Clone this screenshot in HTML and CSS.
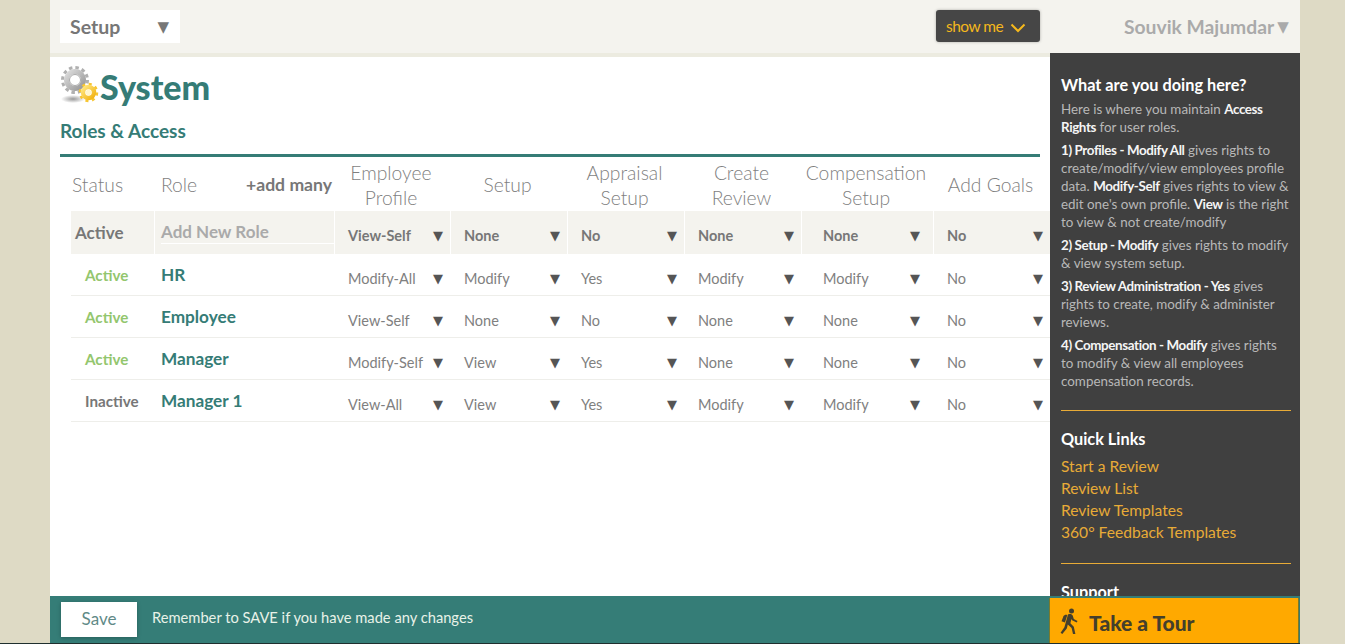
FILE: index.html
```html
<!DOCTYPE html>
<html lang="en">
<head>
<meta charset="utf-8">
<title>System - Roles &amp; Access</title>
<link rel="stylesheet" href="styles.css">
</head>
<body>
<div class="shell">
  <header class="topbar">
    <div class="nav-select"><span>Setup</span><span class="nav-arrow">▼</span></div>
    <button class="show-me">show me
      <svg class="chev" width="16" height="10" viewBox="0 0 16 10"><path d="M1.500 1.500 8 8l6.500-6.500" fill="none" stroke="#f5b81c" stroke-width="2"/></svg>
    </button>
    <div class="user"><span>Souvik Majumdar</span><span class="user-arrow">▼</span></div>
  </header>
  <div class="content">
    <main class="main">
      <div class="title-row">
        <svg class="gears" width="40" height="40" viewBox="0 0 40 40">
          <defs>
            <linearGradient id="gr" x1="0" y1="0" x2="1" y2="1"><stop offset="0" stop-color="#dcdcdc"/><stop offset="1" stop-color="#979797"/></linearGradient>
            <linearGradient id="go" x1="0" y1="0" x2="1" y2="1"><stop offset="0" stop-color="#ffe680"/><stop offset="1" stop-color="#f2b311"/></linearGradient>
            <radialGradient id="sh"><stop offset="0" stop-color="#999"/><stop offset="1" stop-color="#999" stop-opacity="0"/></radialGradient>
          </defs>
          <ellipse cx="13" cy="34" rx="12" ry="4" fill="url(#sh)"/>
          <circle cx="15" cy="15" r="12.500" fill="none" stroke="#b0b0b0" stroke-width="3" stroke-dasharray="3.500 3.045"/>
          <circle cx="15" cy="15" r="8.500" fill="none" stroke="url(#gr)" stroke-width="5"/>
          <circle cx="15" cy="15" r="5.500" fill="#fff" stroke="#aaa" stroke-width="1"/>
          <circle cx="28.500" cy="27.500" r="8.500" fill="none" stroke="#f7c631" stroke-width="2.500" stroke-dasharray="3 3.675"/>
          <circle cx="28.500" cy="27.500" r="5.500" fill="none" stroke="url(#go)" stroke-width="4.500"/>
          <circle cx="28.500" cy="27.500" r="2.800" fill="#fff6cf"/>
        </svg>
        <h1 class="title">System</h1>
      </div>
      <h2 class="subtitle">Roles &amp; Access</h2>
      <div class="rule"></div>
      <div class="table">
        <div class="row head">
          <div class="hcell left">Status</div>
          <div class="hcell role-head"><span>Role</span><span class="add-many">+add many</span></div>
          <div class="hcell">Employee<br>Profile</div>
          <div class="hcell">Setup</div>
          <div class="hcell">Appraisal<br>Setup</div>
          <div class="hcell">Create<br>Review</div>
          <div class="hcell">Compensation<br>Setup</div>
          <div class="hcell">Add Goals</div>
        </div>
        <div class="row add">
          <div class="status strong">Active</div>
          <div class="role-input"><span class="role-input-text">Add New Role</span></div>
          <div class="sel"><span>View-Self</span><i>▼</i></div>
          <div class="sel"><span>None</span><i>▼</i></div>
          <div class="sel"><span>No</span><i>▼</i></div>
          <div class="sel"><span>None</span><i>▼</i></div>
          <div class="sel wide"><span>None</span><i>▼</i></div>
          <div class="sel"><span>No</span><i>▼</i></div>
        </div>
        <div class="row item">
          <div class="status on">Active</div>
          <div class="role">HR</div>
          <div class="sel"><span>Modify-All</span><i>▼</i></div>
          <div class="sel"><span>Modify</span><i>▼</i></div>
          <div class="sel"><span>Yes</span><i>▼</i></div>
          <div class="sel"><span>Modify</span><i>▼</i></div>
          <div class="sel wide"><span>Modify</span><i>▼</i></div>
          <div class="sel"><span>No</span><i>▼</i></div>
        </div>
        <div class="row item">
          <div class="status on">Active</div>
          <div class="role">Employee</div>
          <div class="sel"><span>View-Self</span><i>▼</i></div>
          <div class="sel"><span>None</span><i>▼</i></div>
          <div class="sel"><span>No</span><i>▼</i></div>
          <div class="sel"><span>None</span><i>▼</i></div>
          <div class="sel wide"><span>None</span><i>▼</i></div>
          <div class="sel"><span>No</span><i>▼</i></div>
        </div>
        <div class="row item">
          <div class="status on">Active</div>
          <div class="role">Manager</div>
          <div class="sel"><span>Modify-Self</span><i>▼</i></div>
          <div class="sel"><span>View</span><i>▼</i></div>
          <div class="sel"><span>Yes</span><i>▼</i></div>
          <div class="sel"><span>None</span><i>▼</i></div>
          <div class="sel wide"><span>None</span><i>▼</i></div>
          <div class="sel"><span>No</span><i>▼</i></div>
        </div>
        <div class="row item">
          <div class="status off">Inactive</div>
          <div class="role">Manager 1</div>
          <div class="sel"><span>View-All</span><i>▼</i></div>
          <div class="sel"><span>View</span><i>▼</i></div>
          <div class="sel"><span>Yes</span><i>▼</i></div>
          <div class="sel"><span>Modify</span><i>▼</i></div>
          <div class="sel wide"><span>Modify</span><i>▼</i></div>
          <div class="sel"><span>No</span><i>▼</i></div>
        </div>
      </div>
    </main>
    <aside class="side">
      <h3 class="side-h first">What are you doing here?</h3>
      <p class="side-p">Here is where you maintain <b>Access<br>Rights</b> for user roles.</p>
      <p class="side-p"><b>1) Profiles - Modify All</b> gives rights to<br>create/modify/view employees profile<br>data. <b>Modify-Self</b> gives rights to view &amp;<br>edit one's own profile. <b>View</b> is the right<br>to view &amp; not create/modify</p>
      <p class="side-p"><b>2) Setup - Modify</b> gives rights to modify<br>&amp; view system setup.</p>
      <p class="side-p"><b>3) Review Administration - Yes</b> gives<br>rights to create, modify &amp; administer<br>reviews.</p>
      <p class="side-p"><b>4) Compensation - Modify</b> gives rights<br>to modify &amp; view all employees<br>compensation records.</p>
      <div class="side-hr"></div>
      <h3 class="side-h">Quick Links</h3>
      <div class="links">
        <a href="#">Start a Review</a>
        <a href="#">Review List</a>
        <a href="#">Review Templates</a>
        <a href="#">360° Feedback Templates</a>
      </div>
      <div class="side-hr"></div>
      <h3 class="side-h">Support</h3>
    </aside>
  </div>
  <footer class="footer">
    <button class="save">Save</button>
    <span class="remember">Remember to SAVE if you have made any changes</span>
    <div class="tour">
      <svg class="hiker" width="20" height="27" viewBox="0 0 20 27">
        <circle cx="11.500" cy="3" r="2.500" fill="#443f2c"/>
        <path d="M8 6.500c2-.8 4-.5 4.800 1.200l1 3.300 3.700 2-.8 1.500-4.600-2.200-.7-1.300-1 4.300 3.400 3.500 1.600 7.200h-2.400l-1.400-6-3.800-3.400-1 3.800L2.300 26 .6 24.700l3.800-5.500z" fill="#443f2c"/>
        <path d="M7.300 7 5 14.500 1.500 13.300 3.500 8.200C4.200 6.800 6 6.300 7.300 7z" fill="#443f2c"/>
      </svg>
      <span class="tour-text">Take a Tour</span>
    </div>
  </footer>
</div>
<div class="base-line"></div>
</body>
</html>
```
FILE: styles.css
```css
* { box-sizing: border-box; }
html, body { margin: 0; padding: 0; }
body {
  height: 644px;
  overflow: hidden;
  background: #dedac5;
  font-family: "Lato", "Open Sans", sans-serif;
  color: #777;
}
.shell {
  width: 1250px;
  height: 643px;
  margin-left: 50px;
  display: flex;
  flex-direction: column;
}
.base-line { height: 1px; width: 1300px; background: #1f2f2e; }

/* top bar */
.topbar {
  height: 53px;
  flex: none;
  background: #f4f3ee;
  display: flex;
  align-items: flex-start;
  padding: 10px 10px 0;
}
.nav-select {
  width: 120px;
  height: 33px;
  background: #fff;
  display: flex;
  justify-content: space-between;
  align-items: center;
  padding: 0 10px;
  font-size: 19.500px;
  font-weight: 700;
  color: #777;
}
.nav-arrow { font-family: "DejaVu Sans", sans-serif; font-size: 15px; font-weight: 400; margin-right: 1px; }
.show-me {
  margin-left: 756px;
  width: 104px;
  height: 32px;
  border: 0;
  border-radius: 3px;
  background: #464646;
  box-shadow: 0 0 3px rgba(0,0,0,.3);
  color: #f5b81c;
  font: 400 15.500px "Lato", sans-serif;
  letter-spacing: -.5px;
  display: flex;
  align-items: center;
  padding: 0 0 0 10px;
  gap: 7px;
}
.chev { margin-top: 4px; }
.user {
  margin-left: 84px;
  display: flex;
  align-items: center;
  height: 33px;
  font-size: 19.300px;
  font-weight: 700;
  color: #aaa;
  white-space: nowrap;
  gap: 3px;
}
.user-arrow { font-family: "DejaVu Sans", sans-serif; font-size: 15px; font-weight: 400; }

.content { flex: 1; display: flex; min-height: 0; }

/* main */
.main {
  width: 1000px;
  flex: none;
  background: #fff;
  border-top: 4px solid #ecebe0;
  padding: 0 10px;
}
.title-row { display: flex; align-items: flex-start; height: 62px; padding-top: 8px; }
.gears { flex: none; margin: 0 -1px 0 0; }
.title {
  margin: 2px 0 0 1px;
  font-size: 34px;
  line-height: 40px;
  font-weight: 900;
  color: #357c76;
}
.subtitle {
  margin: 0;
  font-size: 19px;
  line-height: 24px;
  font-weight: 700;
  color: #357c76;
}
.rule { height: 3px; margin-top: 11px; background: #357c76; }

/* table */
.table { margin: 1px -10px 0 11px; }
.row {
  display: grid;
  grid-template-columns: 83px 179px 115px 116px 116px 116px 131px 116px;
  column-gap: 1px;
}
.head { height: 53px; align-items: center; }
.hcell {
  text-align: center;
  font-size: 19.300px;
  font-weight: 300;
  line-height: 25px;
  color: #7f7f7f;
  padding-right: 3px;
}
.hcell.left { text-align: left; padding-left: 1px; padding-right: 0; }
.role-head { display: flex; justify-content: space-between; align-items: center; padding-left: 6px; padding-right: 2px; }
.add-many { font-size: 17.600px; font-weight: 700; color: #777; }
.add { height: 43px; background: #fff; }
.add > div { background: #f4f3ee; }
.item { height: 42px; border-bottom: 1px solid #eeeeea; }
.status { display: flex; align-items: center; font-size: 15.200px; font-weight: 700; padding-left: 14px; }
.status.strong { font-size: 17px; padding-left: 4px; color: #777; }
.status.on { color: #93c66e; }
.status.off { color: #777; }
.role { display: flex; align-items: center; padding-left: 6px; font-size: 17.200px; font-weight: 700; color: #357c76; }
.role-input { padding: 0 0 0 6px; display: flex; }
.role-input-text {
  flex: 1;
  height: 33px;
  line-height: 42px;
  font-size: 17px;
  font-weight: 700;
  color: #aaa;
  border-bottom: 1px solid #fff;
}
.sel {
  display: flex;
  justify-content: space-between;
  align-items: center;
  padding: 6px 7px 0 13px;
  font-size: 14.500px;
  color: #808080;
}
.item .sel { padding-top: 8px; }
.sel.wide { padding-left: 21px; padding-right: 13px; }
.add .sel { font-weight: 700; color: #777; }
.sel i { font-family: "DejaVu Sans", sans-serif; font-style: normal; font-size: 13px; font-weight: 400; color: #555; }

/* sidebar */
.side {
  width: 250px;
  flex: none;
  background: #404040;
  padding: 21px 9px 0 11px;
  overflow: hidden;
  color: #b8b8b8;
}
.side-h {
  margin: 0;
  font-size: 16.300px;
  line-height: 22px;
  font-weight: 700;
  color: #fff;
}
.side-p {
  margin: 4px 0 5px;
  font-size: 13.400px;
  line-height: 18px;
  white-space: nowrap;
}
.side-p + .side-p { margin-top: 5px; }
.side-p b { font-weight: 700; color: #f5f5f5; letter-spacing: -.38px; }
.side-hr { height: 1px; background: #e8ab37; margin: 20px 0 17px; }
.links { display: flex; flex-direction: column; margin-top: 5px; }
.links a { font-size: 15.600px; line-height: 22px; color: #e8ab37; text-decoration: none; }

/* footer */
.footer {
  height: 47px;
  flex: none;
  background: #357d77;
  display: flex;
  align-items: flex-start;
  padding-left: 11px;
}
.save {
  width: 76px;
  height: 35px;
  margin-top: 6px;
  border: 0;
  background: #fff;
  box-shadow: 0 1px 4px rgba(0,0,0,.25);
  font: 400 17px "Lato", sans-serif;
  color: #5f8a87;
  padding-bottom: 3px;
}
.remember { margin: 11px 0 0 15px; font-size: 14.700px; line-height: 20px; color: #e8f2e8; white-space: nowrap; }
.tour {
  margin-left: auto;
  margin-right: 1px;
  margin-top: 2px;
  width: 250px;
  height: 45px;
  background: #ffa900;
  border-right: 1px solid #7a7a2c;
  border-left: 1px solid #7a7a2c;
  display: flex;
  align-items: center;
  padding-left: 10px;
}
.hiker { flex: none; margin-top: 1px; }
.tour-text { margin-left: 9px; margin-top: 3px; font-size: 21px; font-weight: 900; color: #443f2c; white-space: nowrap; }
```
